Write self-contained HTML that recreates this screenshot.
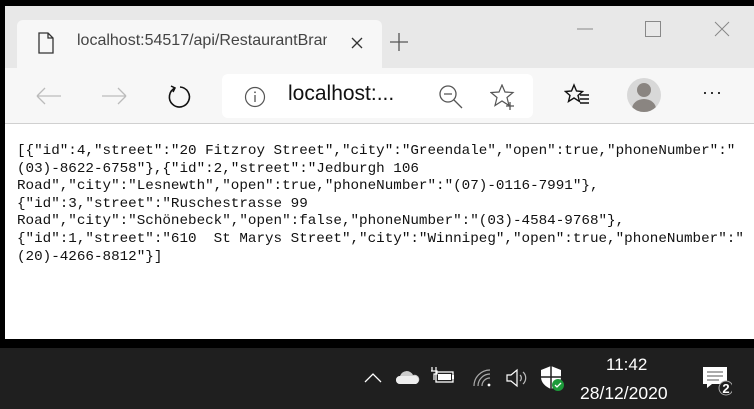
<!DOCTYPE html>
<html><head><meta charset="utf-8"><style>
*{margin:0;padding:0;box-sizing:border-box}
body{width:754px;height:409px;background:#000;position:relative;overflow:hidden;font-family:"Segoe UI","Liberation Sans",sans-serif}
.win{position:absolute;left:5px;top:6px;width:749px;height:333px;background:#fff}
.tabs{position:absolute;left:0;top:0;width:749px;height:62px;background:#e8e8e8}
.tab{position:absolute;left:12px;top:14px;width:365px;height:48px;background:#f7f7f7;border-radius:6px 6px 0 0}
.tool{position:absolute;left:0;top:62px;width:749px;height:56px;background:#f7f7f7;border-bottom:1px solid #d0d0d0}
.addr{position:absolute;left:217px;top:6px;width:311px;height:44px;background:#fff;border-radius:6px}
.content{position:absolute;left:17px;top:143px;font-family:"Liberation Mono",monospace;font-size:14.25px;line-height:17.6px;color:#111;white-space:pre}
.task{position:absolute;left:0;top:348px;width:754px;height:61px;background:#1f1f1f;color:#fff}
</style></head><body>
<div class="win">
<div class="tabs">
 <div class="tab">
  <svg style="position:absolute;left:21px;top:12px" width="16" height="22" viewBox="0 0 16 22"><path d="M1 1h9l5 5v15H1z M10 1v5h5" fill="none" stroke="#333" stroke-width="1.3"/></svg>
  <div style="position:absolute;left:60px;top:12px;font-size:16px;color:#444;white-space:nowrap;width:250px;overflow:hidden">localhost:54517/api/RestaurantBranches</div>
  <svg style="position:absolute;left:333px;top:16px" width="14" height="14"><path d="M2 2L12 12M12 2L2 12" stroke="#333" stroke-width="1.3"/></svg>
 </div>
 <svg style="position:absolute;left:384px;top:26px" width="20" height="20"><path d="M10 1v18M1 10h18" stroke="#555" stroke-width="1.3"/></svg>
 <svg style="position:absolute;left:572px;top:21px" width="16" height="4"><path d="M0 2h16" stroke="#888" stroke-width="1"/></svg>
 <svg style="position:absolute;left:640px;top:15px" width="16" height="16"><rect x="0.5" y="0.5" width="15" height="15" fill="none" stroke="#888"/></svg>
 <svg style="position:absolute;left:709px;top:15px" width="16" height="16"><path d="M1 1L15 15M15 1L1 15" stroke="#888" stroke-width="1"/></svg>
</div>
<div class="tool">
 <svg style="position:absolute;left:30px;top:19px" width="28" height="18"><path d="M2 9h24M2 9l8-8M2 9l8 8" fill="none" stroke="#bbb" stroke-width="1.3"/></svg>
 <svg style="position:absolute;left:95px;top:19px" width="28" height="18"><path d="M2 9h24M26 9l-8-8M26 9l-8 8" fill="none" stroke="#bbb" stroke-width="1.3"/></svg>
 <svg style="position:absolute;left:162px;top:16px" width="26" height="26"><path d="M8 4A10 10 0 1 0 13 3" fill="none" stroke="#111" stroke-width="1.6"/><path d="M4 2l4 2-2 4" fill="none" stroke="#111" stroke-width="1.5"/></svg>
 <div class="addr">
  <svg style="position:absolute;left:22px;top:12px" width="22" height="22"><circle cx="11" cy="11" r="9.5" fill="none" stroke="#555" stroke-width="1.2"/><path d="M11 9v7" stroke="#555" stroke-width="1.3"/><circle cx="11" cy="6.3" r="0.9" fill="#555"/></svg>
  <div style="position:absolute;left:66px;top:8px;font-size:21px;color:#111">localhost:...</div>
  <svg style="position:absolute;left:216px;top:10px" width="28" height="28"><circle cx="10" cy="10" r="8" fill="none" stroke="#555" stroke-width="1.3"/><path d="M6 10h8M16 16l8 8" stroke="#555" stroke-width="1.3"/></svg>
  <svg style="position:absolute;left:268px;top:10px" width="28" height="28"><path d="M12 1l3 7 8 .5-6 5 2 8-7-4.5-7 4.5 2-8-6-5 8-.5z" fill="none" stroke="#555" stroke-width="1.2"/><path d="M20 18v8M16 22h8" stroke="#555" stroke-width="1.3"/></svg>
 </div>
 <svg style="position:absolute;left:559px;top:15px" width="28" height="28"><path d="M10 2l2.5 6 6 .5-4.5 4 1.5 6-5.5-3.5-5.5 3.5 1.5-6-4.5-4 6-.5z" fill="none" stroke="#111" stroke-width="1.4"/><path d="M16 12h9M16 16h9M16 20h9" stroke="#111" stroke-width="1.4"/></svg>
 <div style="position:absolute;left:622px;top:10px;width:34px;height:34px;border-radius:50%;background:#d8d8d8;overflow:hidden">
  <div style="position:absolute;left:10px;top:5px;width:14px;height:14px;border-radius:50%;background:#8a8581"></div>
  <div style="position:absolute;left:5px;top:21px;width:24px;height:20px;border-radius:50%;background:#8a8581"></div>
 </div>
 <div style="position:absolute;left:697px;top:14px;font-size:18px;color:#111;letter-spacing:1px">···</div>
</div>
</div>
<div class="content">[{"id":4,"street":"20 Fitzroy Street","city":"Greendale","open":true,"phoneNumber":"
(03)-8622-6758"},{"id":2,"street":"Jedburgh 106
Road","city":"Lesnewth","open":true,"phoneNumber":"(07)-0116-7991"},
{"id":3,"street":"Ruschestrasse 99
Road","city":"Schönebeck","open":false,"phoneNumber":"(03)-4584-9768"},
{"id":1,"street":"610  St Marys Street","city":"Winnipeg","open":true,"phoneNumber":"
(20)-4266-8812"}]</div>
<div class="task">
 <svg style="position:absolute;left:364px;top:24px" width="18" height="12"><path d="M1 10l8-8 8 8" fill="none" stroke="#fff" stroke-width="1.3"/></svg>
 <svg style="position:absolute;left:395px;top:20px" width="26" height="18"><path d="M5 16a4 4 0 0 1 0-8 7 7 0 0 1 13-1 4.5 4.5 0 0 1 3 9z" fill="#ccc"/><path d="M5 16a4 4 0 0 1 0-8h16a4.5 4.5 0 0 1 0 8z" fill="#eee"/></svg>
 <svg style="position:absolute;left:430px;top:18px" width="26" height="20"><rect x="6" y="6" width="17" height="10" fill="none" stroke="#fff" stroke-width="1.3"/><rect x="8" y="8" width="13" height="6" fill="#fff"/><path d="M23 9v4" stroke="#fff" stroke-width="2"/><path d="M2 1v4M6 1v4M1 5h6v3H4v6" fill="none" stroke="#fff" stroke-width="1.2"/></svg>
 <svg style="position:absolute;left:472px;top:20px" width="22" height="20"><path d="M2 18a16 16 0 0 1 16-16M6 18a12 12 0 0 1 12-12M10 18a8 8 0 0 1 8-8" fill="none" stroke="#aaa" stroke-width="1.2"/><circle cx="17" cy="17" r="1.4" fill="#fff"/></svg>
 <svg style="position:absolute;left:505px;top:20px" width="22" height="20"><path d="M2 7h4l6-5v16l-6-5H2z" fill="none" stroke="#fff" stroke-width="1.2"/><path d="M15 7a4 4 0 0 1 0 6M18 4a8 8 0 0 1 0 12" fill="none" stroke="#bbb" stroke-width="1.2"/></svg>
 <svg style="position:absolute;left:540px;top:17px" width="26" height="26"><path d="M11 1l10 4v7c0 6-5 10-10 12C6 22 1 18 1 12V5z" fill="#fff"/><path d="M11 1v23M1 12h20" stroke="#1f1f1f" stroke-width="1.5"/><circle cx="18" cy="20" r="6" fill="#1c9a3a"/><path d="M15 20l2 2 4-4" fill="none" stroke="#fff" stroke-width="1.3"/></svg>
 <div style="position:absolute;left:606px;top:7px;font-size:17px;color:#fff">11:42</div>
 <div style="position:absolute;left:580px;top:35px;font-size:17.5px;color:#fff">28/12/2020</div>
 <svg style="position:absolute;left:702px;top:18px" width="30" height="30"><path d="M1 1h24v17H10l-5 4v-4H1z" fill="#fff"/><path d="M5 6h16M5 10h16M5 14h12" stroke="#555" stroke-width="1"/><circle cx="24" cy="22" r="7" fill="#1f1f1f" stroke="#aaa" stroke-width="1"/><text x="24" y="27" text-anchor="middle" font-size="13" font-weight="bold" fill="#fff" font-family="Liberation Sans,sans-serif">2</text></svg>
</div>
</body></html>
